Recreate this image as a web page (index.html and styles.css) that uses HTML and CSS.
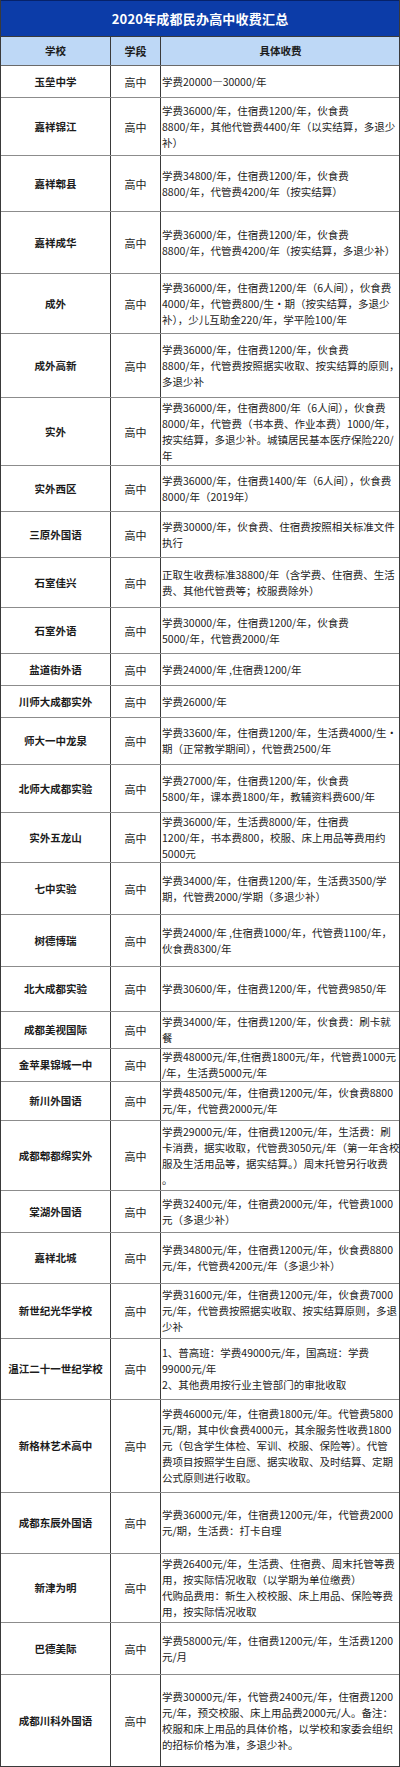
FILE: index.html
```html
<!DOCTYPE html>
<html lang="zh-CN">
<head>
<meta charset="utf-8">
<title>2020年成都民办高中收费汇总</title>
<link rel="stylesheet" href="styles.css">
</head>
<body>
<div class="sheet">
  <div class="title">2020年成都民办高中收费汇总</div>
  <div class="row head h29"><div class="c name">学校</div><div class="c stage">学段</div><div class="c fee center">具体收费</div></div>
  <div class="row h32"><div class="c name">玉垒中学</div><div class="c stage">高中</div><div class="c fee">学费20000—30000/年</div></div>
  <div class="row h58"><div class="c name">嘉祥锦江</div><div class="c stage">高中</div><div class="c fee">学费36000/年，住宿费1200/年，伙食费<br>8800/年，其他代管费4400/年（以实结算，多退少<br>补）</div></div>
  <div class="row h56"><div class="c name">嘉祥郫县</div><div class="c stage">高中</div><div class="c fee">学费34800/年，住宿费1200/年，伙食费<br>8800/年，代管费4200/年（按实结算）</div></div>
  <div class="row h62"><div class="c name">嘉祥成华</div><div class="c stage">高中</div><div class="c fee">学费36000/年，住宿费1200/年，伙食费<br>8800/年，代管费4200/年（按实结算，多退少补）</div></div>
  <div class="row h60"><div class="c name">成外</div><div class="c stage">高中</div><div class="c fee">学费36000/年，住宿费1200/年（6人间），伙食费<br>4000/年，代管费800/生·期（按实结算，多退少<br>补），少儿互助金220/年，学平险100/年</div></div>
  <div class="row h64"><div class="c name">成外高新</div><div class="c stage">高中</div><div class="c fee">学费36000/年，住宿费1200/年，伙食费<br>8800/年，代管费按照据实收取、按实结算的原则，<br>多退少补</div></div>
  <div class="row h68"><div class="c name">实外</div><div class="c stage">高中</div><div class="c fee">学费36000/年，住宿费800/年（6人间），伙食费<br>8000/年，代管费（书本费、作业本费）1000/年，<br>按实结算，多退少补。城镇居民基本医疗保险220/<br>年</div></div>
  <div class="row h46"><div class="c name">实外西区</div><div class="c stage">高中</div><div class="c fee">学费36000/年，住宿费1400/年（6人间），伙食费<br>8000/年（2019年）</div></div>
  <div class="row h46"><div class="c name">三原外国语</div><div class="c stage">高中</div><div class="c fee">学费30000/年，伙食费、住宿费按照相关标准文件<br>执行</div></div>
  <div class="row h50"><div class="c name">石室佳兴</div><div class="c stage">高中</div><div class="c fee">正取生收费标准38800/年（含学费、住宿费、生活<br>费、其他代管费等；校服费除外）</div></div>
  <div class="row h46"><div class="c name">石室外语</div><div class="c stage">高中</div><div class="c fee">学费30000/年，住宿费1200/年，伙食费<br>5000/年，代管费2000/年</div></div>
  <div class="row h32"><div class="c name">盐道街外语</div><div class="c stage">高中</div><div class="c fee">学费24000/年 ,住宿费1200/年</div></div>
  <div class="row h32"><div class="c name">川师大成都实外</div><div class="c stage">高中</div><div class="c fee">学费26000/年</div></div>
  <div class="row h47"><div class="c name">师大一中龙泉</div><div class="c stage">高中</div><div class="c fee">学费33600/年，住宿费1200/年，生活费4000/生·<br>期（正常教学期间），代管费2500/年</div></div>
  <div class="row h48"><div class="c name">北师大成都实验</div><div class="c stage">高中</div><div class="c fee">学费27000/年，住宿费1200/年，伙食费<br>5800/年，课本费1800/年，教辅资料费600/年</div></div>
  <div class="row h50"><div class="c name">实外五龙山</div><div class="c stage">高中</div><div class="c fee">学费36000/年，生活费8000/年，住宿费<br>1200/年，书本费800，校服、床上用品等费用约<br>5000元</div></div>
  <div class="row h52"><div class="c name">七中实验</div><div class="c stage">高中</div><div class="c fee">学费34000/年，住宿费1200/年，生活费3500/学<br>期，代管费2000/学期（多退少补）</div></div>
  <div class="row h52"><div class="c name">树德博瑞</div><div class="c stage">高中</div><div class="c fee">学费24000/年 ,住宿费1000/年，代管费1100/年，<br>伙食费8300/年</div></div>
  <div class="row h45"><div class="c name">北大成都实验</div><div class="c stage">高中</div><div class="c fee">学费30600/年，住宿费1200/年，代管费9850/年</div></div>
  <div class="row h37"><div class="c name">成都美视国际</div><div class="c stage">高中</div><div class="c fee">学费34000/年，住宿费1200/年，伙食费：刷卡就<br>餐</div></div>
  <div class="row h33"><div class="c name">金苹果锦城一中</div><div class="c stage">高中</div><div class="c fee">学费48000元/年,住宿费1800元/年，代管费1000元<br>/年，生活费5000元/年</div></div>
  <div class="row h39"><div class="c name">新川外国语</div><div class="c stage">高中</div><div class="c fee">学费48500元/年，住宿费1200元/年，伙食费8800<br>元/年，代管费2000元/年</div></div>
  <div class="row h70"><div class="c name">成都郫都绵实外</div><div class="c stage">高中</div><div class="c fee">学费29000元/年，住宿费1200元/年，生活费：刷<br>卡消费，据实收取，代管费3050元/年（第一年含校<br>服及生活用品等，据实结算。）周末托管另行收费<br>。</div></div>
  <div class="row h42"><div class="c name">棠湖外国语</div><div class="c stage">高中</div><div class="c fee">学费32400元/年，住宿费2000元/年，代管费1000<br>元（多退少补）</div></div>
  <div class="row h51"><div class="c name">嘉祥北城</div><div class="c stage">高中</div><div class="c fee">学费34800元/年，住宿费1200元/年，伙食费8800<br>元/年，代管费4200元/年（多退少补）</div></div>
  <div class="row h55"><div class="c name">新世纪光华学校</div><div class="c stage">高中</div><div class="c fee">学费31600元/年，住宿费1200元/年，伙食费7000<br>元/年，代管费按照据实收取、按实结算原则，多退<br>少补</div></div>
  <div class="row h61"><div class="c name">温江二十一世纪学校</div><div class="c stage">高中</div><div class="c fee">1、普高班：学费49000元/年，国高班：学费<br>99000元/年<br>2、其他费用按行业主管部门的审批收取</div></div>
  <div class="row h93"><div class="c name">新格林艺术高中</div><div class="c stage">高中</div><div class="c fee">学费46000元/年，住宿费1800元/年。代管费5800<br>元/期，其中伙食费4000元，其余服务性收费1800<br>元（包含学生体检、军训、校服、保险等）。代管<br>费项目按照学生自愿、据实收取、及时结算、定期<br>公式原则进行收取。</div></div>
  <div class="row h61"><div class="c name">成都东辰外国语</div><div class="c stage">高中</div><div class="c fee">学费36000元/年，住宿费1200元/年，代管费2000<br>元/期，生活费：打卡自理</div></div>
  <div class="row h69"><div class="c name">新津为明</div><div class="c stage">高中</div><div class="c fee">学费26400元/年，生活费、住宿费、周末托管等费<br>用，按实际情况收取（以学期为单位缴费）<br>代购品费用：新生入校校服、床上用品、保险等费<br>用，按实际情况收取</div></div>
  <div class="row h52"><div class="c name">巴德美际</div><div class="c stage">高中</div><div class="c fee">学费58000元/年，住宿费1200元/年，生活费1200<br>元/月</div></div>
  <div class="row h91"><div class="c name">成都川科外国语</div><div class="c stage">高中</div><div class="c fee">学费30000元/年，代管费2400元/年，住宿费1200<br>元/年，预交校服、床上用品费2000元/人。备注：<br>校服和床上用品的具体价格，以学校和家委会组织<br>的招标价格为准，多退少补。</div></div>
</div>
</body>
</html>
```

FILE: styles.css
```css
html, body {
  margin: 0;
  padding: 0;
  background: #ffffff;
}

body {
  font-family: "Noto Sans CJK SC", "Noto Sans", sans-serif;
  color: #1c1c1c;
  font-size: 10.5px;
  line-height: 16px;
}

.sheet {
  width: 400px;
  box-sizing: border-box;
  border-left: 1px solid #3a3a3a;
  border-right: 1px solid #3a3a3a;
  border-bottom: 1px solid #3a3a3a;
}

.title {
  height: 37px;
  box-sizing: border-box;
  background: #0c3ca8;
  border-top: 1px solid #06226a;
  border-bottom: 1px solid #3a3a3a;
  color: #ffffff;
  font-weight: 700;
  font-size: 13px;
  display: flex;
  align-items: center;
  justify-content: center;
  letter-spacing: 0.2px;
}

.row {
  display: grid;
  grid-template-columns: 110px 50px 1fr;
  box-sizing: border-box;
  border-bottom: 1px solid #8c8c8c;
}

.row:last-child {
  border-bottom: none;
}

.head {
  background: #bed8f6;
  border-bottom: 1px solid #6a6a6a;
}

.c {
  display: flex;
  align-items: center;
  box-sizing: border-box;
  white-space: nowrap;
  overflow: hidden;
}

.name {
  justify-content: center;
  font-weight: 700;
  border-right: 1px solid #3a3a3a;
}

.stage {
  justify-content: center;
  border-right: 1px solid #3a3a3a;
  font-size: 11px;
}

.fee {
  padding-left: 1px;
}

.head .c {
  font-weight: 700;
}

.center {
  justify-content: center;
}

.h29 { height: 29px; }
.h32 { height: 32px; }
.h33 { height: 33px; }
.h37 { height: 37px; }
.h39 { height: 39px; }
.h42 { height: 42px; }
.h45 { height: 45px; }
.h46 { height: 46px; }
.h47 { height: 47px; }
.h48 { height: 48px; }
.h50 { height: 50px; }
.h51 { height: 51px; }
.h52 { height: 52px; }
.h55 { height: 55px; }
.h56 { height: 56px; }
.h58 { height: 58px; }
.h60 { height: 60px; }
.h61 { height: 61px; }
.h62 { height: 62px; }
.h64 { height: 64px; }
.h68 { height: 68px; }
.h69 { height: 69px; }
.h70 { height: 70px; }
.h91 { height: 91px; }
.h93 { height: 93px; }
```
